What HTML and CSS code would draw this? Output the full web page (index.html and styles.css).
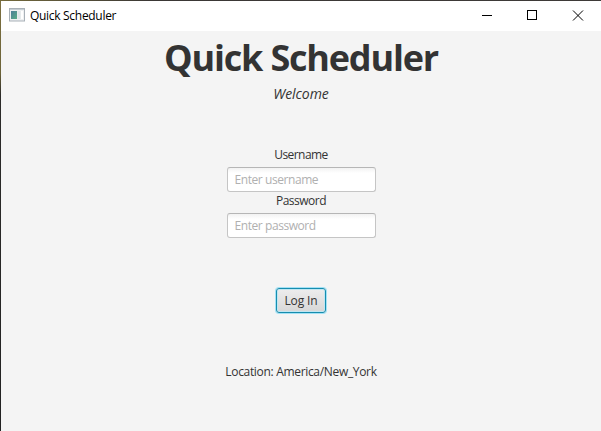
FILE: index.html
```
<!DOCTYPE html>
<html lang="en">
<head>
<meta charset="utf-8">
<title>Quick Scheduler</title>
<link rel="stylesheet" href="styles.css">
</head>
<body>
<div class="window">
  <header class="titlebar">
    <svg class="app-icon" width="16" height="14" viewBox="0 0 16 14">
      <defs><linearGradient id="pane" x1="0" y1="0" x2="1" y2="1"><stop offset="0" stop-color="#4c7e98"/><stop offset="1" stop-color="#58ad86"/></linearGradient></defs>
      <rect x=".5" y=".5" width="15" height="12.5" fill="#eef0f1" stroke="#a9b1b8"/>
      <path d="M1 1.5h14" stroke="#c5cdd3"/>
      <rect x="2" y="3" width="6" height="8" fill="url(#pane)"/>
      <rect x="8.5" y="3" width="3" height="8" fill="#dfe5e8"/>
      <rect x="12" y="3" width="2" height="8" fill="#fff"/>
    </svg>
    <span class="caption">Quick Scheduler</span>
    <svg class="controls" width="120" height="28" viewBox="0 0 120 28" fill="none" stroke="#000">
      <path d="M1 13.5h10" />
      <rect x="46.5" y="8.5" width="9" height="9"/>
      <path d="M92 8.5l10 10M102 8.5l-10 10"/>
    </svg>
  </header>
  <main class="content">
    <h1 class="title">Quick Scheduler</h1>
    <p class="welcome">Welcome</p>
    <form class="form">
      <label class="label" for="u">Username</label>
      <input class="field" id="u" type="text" placeholder="Enter username">
      <label class="label password" for="p">Password</label>
      <input class="field" id="p" type="password" placeholder="Enter password">
      <button class="login" type="button">Log In</button>
    </form>
    <p class="location">Location: America/New_York</p>
  </main>
</div>
</body>
</html>
```
FILE: styles.css
```
* { box-sizing: border-box; }
body { margin: 0; overflow: hidden; font: 12px/16px "Open Sans", "Noto Sans", sans-serif; color: #333; }
.window { width: 601px; height: 431px; padding: 1px 0 0 1px; background: linear-gradient(90deg, #746a3c, #3a3735 25%, #3e3a38) 0 0 / 100% 1px no-repeat, linear-gradient(#7d7040, #6b6238 17%, #2c2b29 22%, #222) 0 0 / 1px 100% no-repeat; display: flex; flex-direction: column; }
.titlebar { height: 30px; flex: none; background: #fff; display: flex; align-items: center; padding-left: 8px; color: #000; }
.app-icon { margin-top: -2px; }
.caption { margin-left: 5px; letter-spacing: -.3px; white-space: nowrap; }
.controls { margin-left: auto; }
.content { flex: 1; background: #f4f4f4; display: flex; flex-direction: column; align-items: center; }
.title { margin: 0; height: 53px; font-size: 36px; line-height: 53px; letter-spacing: -1.2px; font-weight: 700; white-space: nowrap; }
.welcome { margin: 0; height: 20px; font-size: 14px; line-height: 20px; font-style: italic; letter-spacing: -.05px; }
.form { display: flex; flex-direction: column; align-items: center; margin-top: 43px; }
.label { height: 16px; letter-spacing: -.55px; }
.field { width: 149px; height: 25px; margin: 4px 0 0; padding: 0 7px; border: 1px solid #c5c5c5; border-top-color: #b6b6b6; border-radius: 3px; background: linear-gradient(#f2f2f2, #fff 5px); font: inherit; letter-spacing: -.43px; outline: 0; }
.field::placeholder { color: #b0b0b0; opacity: 1; }
.password { margin-top: 1px; }
.field + .label { letter-spacing: -.5px; }
.login { width: 50px; height: 25px; margin: 50px 0 0; padding: 0; border: 1px solid #168dae; border-radius: 3px; background: linear-gradient(#ededed, #d7d7d7); box-shadow: 0 0 0 1px #a3e1f5, inset 0 0 0 1px #c0e6f2; font: inherit; letter-spacing: -.1px; color: #333; }
.location { margin: 51px 0 0; letter-spacing: -.32px; white-space: nowrap; }
```
